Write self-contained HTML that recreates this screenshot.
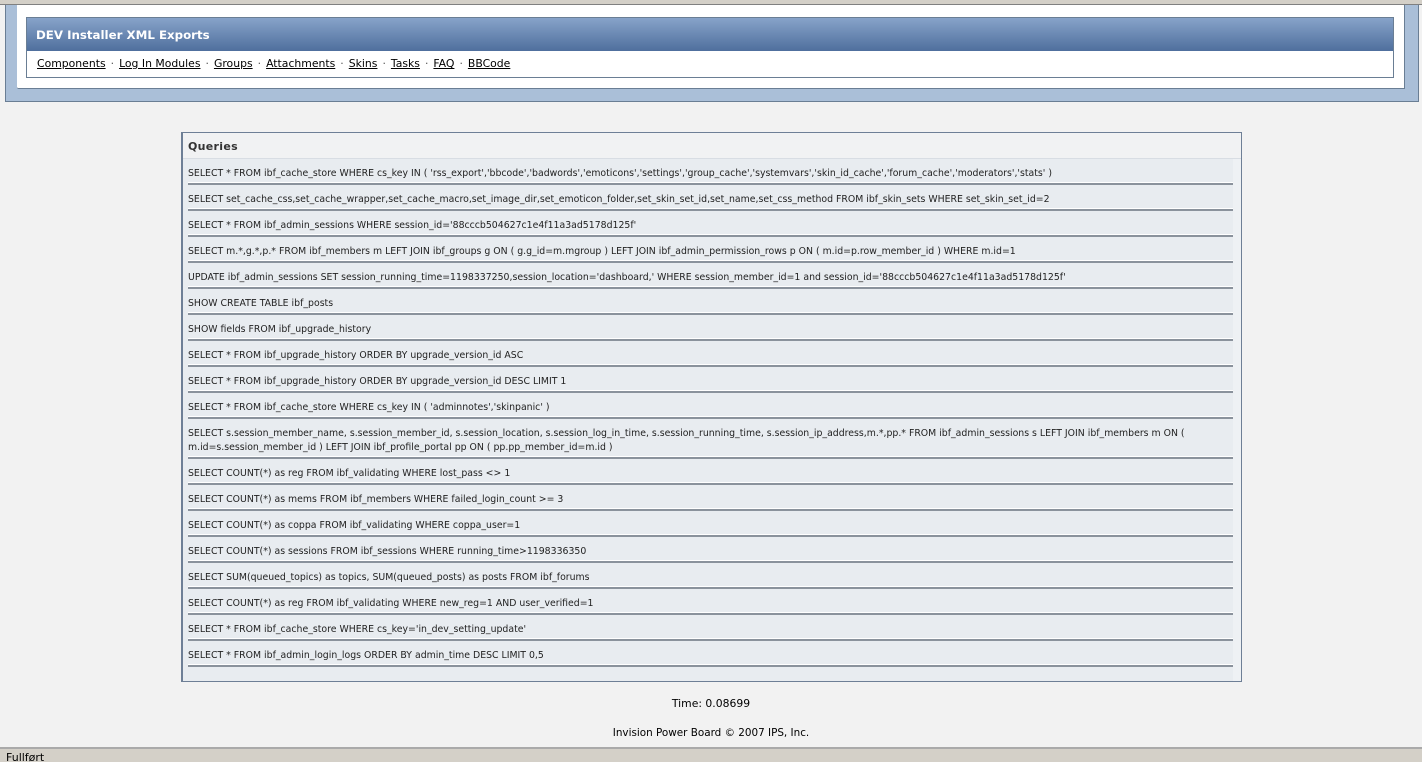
<!DOCTYPE html>
<html><head><meta charset="utf-8"><style>
*{margin:0;padding:0;box-sizing:border-box}
html,body{width:1422px;height:762px;overflow:hidden;background:#f2f2f2;font-family:"DejaVu Sans","Liberation Sans",sans-serif;position:relative}
.abs{position:absolute}
#top{left:0;top:0;width:1422px;height:5px;background:#d4d0c8;border-bottom:1px solid #808080}
#outer{left:5px;top:5px;width:1414px;height:97px;background:#aabfd8;border:1px solid #6a7e94;border-top:none}
#inner{left:17px;top:5px;width:1388px;height:84px;background:#fff;border:1px solid #6a7e94;border-top:none;border-left:none;border-bottom-left-radius:2px}
#hbox{left:26px;top:17px;width:1368px;height:61px;border:1px solid #6a7e94;background:#fff}
#hdr{height:33px;background:linear-gradient(#87a3c9,#4f6f9d);color:#fff;font-weight:bold;font-size:11.8px;padding:10px 0 0 9px}
#links{font-size:10.85px;padding:6px 0 0 10px;color:#000}
#links u{text-decoration:underline}
#links span{color:#555;margin:0 5px}
#q{left:181px;top:132px;width:1061px;height:550px;border:1px solid #6e7f96;border-left-width:2px;background:#e8ecf0}
#qt{height:26px;background:#f1f2f3;font-weight:bold;font-size:11px;color:#333;padding:7px 0 0 5px;border-bottom:1px solid #d8dde3;letter-spacing:.3px}
.r{font-size:9.35px;color:#222;padding:8px 0 0 5px;height:26px;line-height:14px;width:1050px;position:relative}
.r:after{content:"";position:absolute;left:5px;bottom:0;width:1045px;height:2px;background:#8a929c;border-top:1px solid #fff}
.r.two{height:40px}
#rs{position:absolute;right:0;top:26px;width:8px;bottom:0;background:#eef1f4}
#time{left:0;width:1422px;top:697px;text-align:center;font-size:10.8px;color:#000}
#foot{left:0;width:1422px;top:727px;text-align:center;font-size:10.4px;color:#000}
#status{left:0;top:747px;width:1422px;height:15px;background:#d4d0c8;border-top:2px solid #aaa;font-size:11px;padding:2px 0 0 6px;color:#000}
</style></head><body>
<div id="top" class="abs"></div>
<div id="outer" class="abs"></div>
<div id="inner" class="abs"></div>
<div id="hbox" class="abs">
<div id="hdr">DEV Installer XML Exports</div>
<div id="links"><u>Components</u><span>·</span><u>Log In Modules</u><span>·</span><u>Groups</u><span>·</span><u>Attachments</u><span>·</span><u>Skins</u><span>·</span><u>Tasks</u><span>·</span><u>FAQ</u><span>·</span><u>BBCode</u></div>
</div>
<div id="q" class="abs">
<div id="qt">Queries</div>
<div id="rs"></div>
<div class="r">SELECT * FROM ibf_cache_store WHERE cs_key IN ( 'rss_export','bbcode','badwords','emoticons','settings','group_cache','systemvars','skin_id_cache','forum_cache','moderators','stats' )</div>
<div class="r">SELECT set_cache_css,set_cache_wrapper,set_cache_macro,set_image_dir,set_emoticon_folder,set_skin_set_id,set_name,set_css_method FROM ibf_skin_sets WHERE set_skin_set_id=2</div>
<div class="r">SELECT * FROM ibf_admin_sessions WHERE session_id='88cccb504627c1e4f11a3ad5178d125f'</div>
<div class="r">SELECT m.*,g.*,p.* FROM ibf_members m LEFT JOIN ibf_groups g ON ( g.g_id=m.mgroup ) LEFT JOIN ibf_admin_permission_rows p ON ( m.id=p.row_member_id ) WHERE m.id=1</div>
<div class="r">UPDATE ibf_admin_sessions SET session_running_time=1198337250,session_location='dashboard,' WHERE session_member_id=1 and session_id='88cccb504627c1e4f11a3ad5178d125f'</div>
<div class="r">SHOW CREATE TABLE ibf_posts</div>
<div class="r">SHOW fields FROM ibf_upgrade_history</div>
<div class="r">SELECT * FROM ibf_upgrade_history ORDER BY upgrade_version_id ASC</div>
<div class="r">SELECT * FROM ibf_upgrade_history ORDER BY upgrade_version_id DESC LIMIT 1</div>
<div class="r">SELECT * FROM ibf_cache_store WHERE cs_key IN ( 'adminnotes','skinpanic' )</div>
<div class="r two">SELECT s.session_member_name, s.session_member_id, s.session_location, s.session_log_in_time, s.session_running_time, s.session_ip_address,m.*,pp.* FROM ibf_admin_sessions s LEFT JOIN ibf_members m ON (<br>m.id=s.session_member_id ) LEFT JOIN ibf_profile_portal pp ON ( pp.pp_member_id=m.id )</div>
<div class="r">SELECT COUNT(*) as reg FROM ibf_validating WHERE lost_pass &lt;&gt; 1</div>
<div class="r">SELECT COUNT(*) as mems FROM ibf_members WHERE failed_login_count &gt;= 3</div>
<div class="r">SELECT COUNT(*) as coppa FROM ibf_validating WHERE coppa_user=1</div>
<div class="r">SELECT COUNT(*) as sessions FROM ibf_sessions WHERE running_time&gt;1198336350</div>
<div class="r">SELECT SUM(queued_topics) as topics, SUM(queued_posts) as posts FROM ibf_forums</div>
<div class="r">SELECT COUNT(*) as reg FROM ibf_validating WHERE new_reg=1 AND user_verified=1</div>
<div class="r">SELECT * FROM ibf_cache_store WHERE cs_key='in_dev_setting_update'</div>
<div class="r">SELECT * FROM ibf_admin_login_logs ORDER BY admin_time DESC LIMIT 0,5</div>
</div>
<div id="time" class="abs">Time: 0.08699</div>
<div id="foot" class="abs">Invision Power Board © 2007 IPS, Inc.</div>
<div id="status" class="abs">Fullført</div>
</body></html>
